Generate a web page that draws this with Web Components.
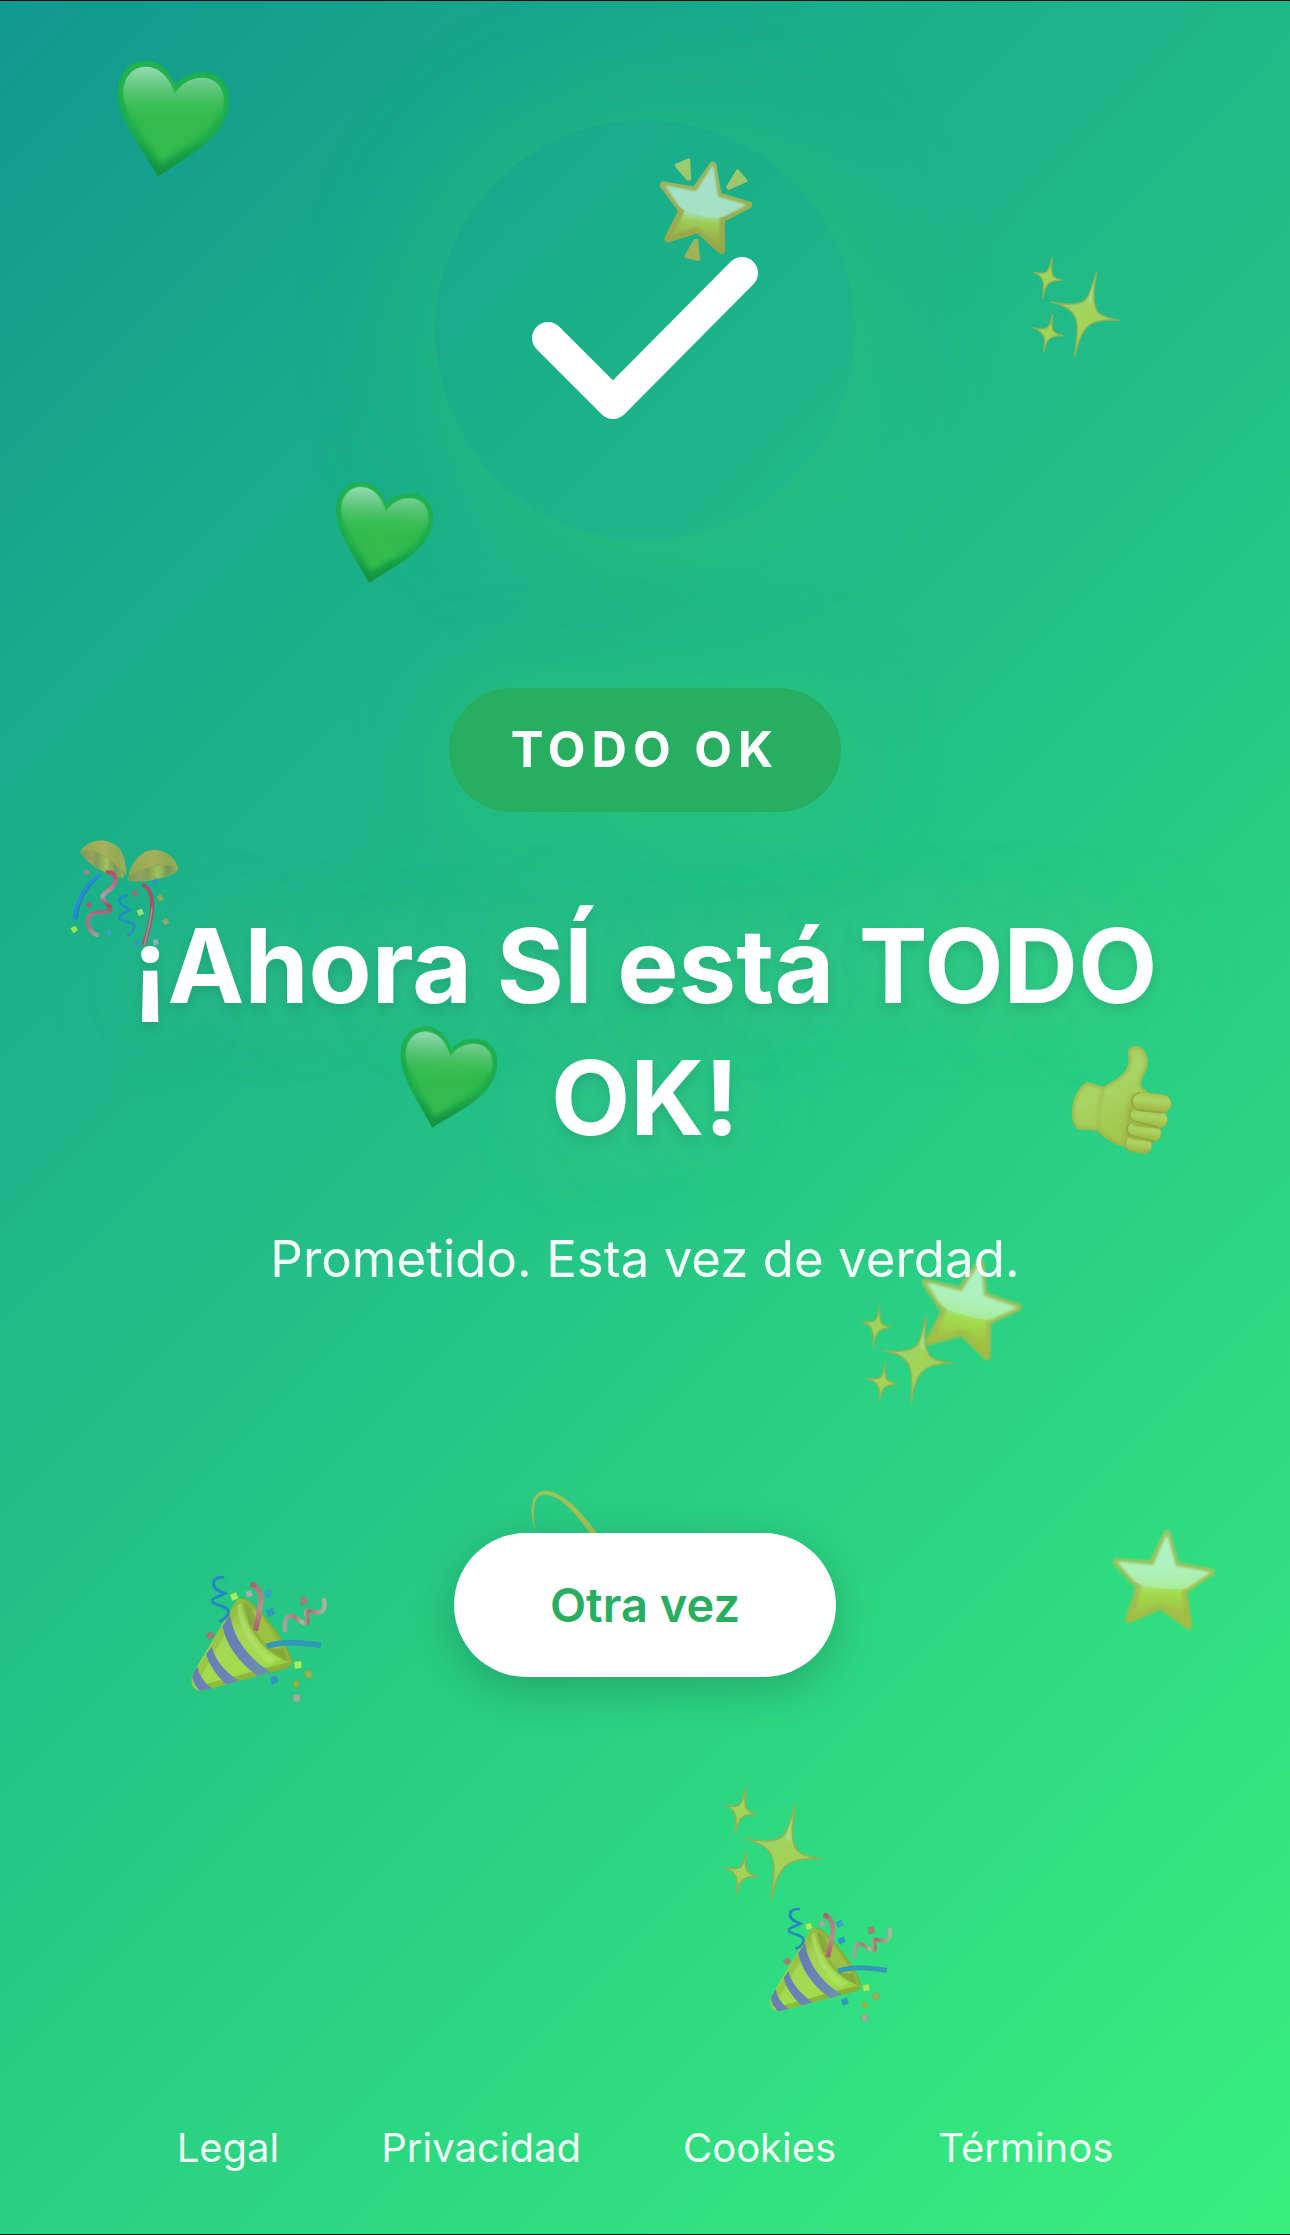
<!DOCTYPE html>
<html lang="es">
<head>
<meta charset="utf-8">
<meta name="viewport" content="width=device-width, initial-scale=1">
<title>Todo OK</title>
<style>
  body {
    margin: 0;
    font-family: Inter, "Liberation Sans", sans-serif;
    color: white;
  }
</style>
</head>
<body>
<success-page>
  <emoji-rain slot="background"></emoji-rain>
  <success-check></success-check>
  <status-badge>TODO OK</status-badge>
  <success-message>
    ¡Ahora SÍ está TODO OK!
    <span slot="subtitle">Prometido. Esta vez de verdad.</span>
  </success-message>
  <retry-button>Otra vez</retry-button>
  <site-footer slot="footer">
    <footer-link href="#legal">Legal</footer-link>
    <footer-link href="#privacidad">Privacidad</footer-link>
    <footer-link href="#cookies">Cookies</footer-link>
    <footer-link href="#terminos">Términos</footer-link>
  </site-footer>
</success-page>

<script>
// Each drawing has its own viewBox; size is the natural width and height in px.
const sparkle = `
  <linearGradient id="spark" x1="0" y1="0" x2="1" y2="1">
    <stop offset="0" stop-color="#8fd08a"/><stop offset=".5" stop-color="#a3d458"/><stop offset="1" stop-color="#93cd58"/>
  </linearGradient>
  <filter id="soft" x="-10%" y="-10%" width="120%" height="120%"><feGaussianBlur stdDeviation="2"/></filter>
  <g filter="url(#soft)" fill="url(#spark)" stroke="#93b152" stroke-width="4" stroke-linejoin="round">
    <path d="M257 96C250 140 244 174 254 204C260 226 288 235 328 241C284 238 246 240 226 264C206 286 198 320 191 350C193 314 204 278 197 246C192 212 158 195 122 186C160 194 200 198 222 180C240 162 244 130 257 96Z"/>
    <path d="M124 52C121 76 119 93 125 105C130 114 140 117 152 120C136 121 119 122 110 133C102 145 98 159 95 174C96 157 100 139 96 124C93 110 82 103 69 97C84 100 98 102 107 95C116 87 119 70 124 52Z"/>
    <path d="M125 223C122 244 120 260 127 272C132 280 143 284 156 287C140 287 122 288 113 299C105 309 101 323 98 336C99 321 104 305 99 292C95 279 82 269 67 263C84 267 99 269 109 263C118 255 120 240 125 223Z"/>
  </g>
  <path d="M248 126C242 150 239 174 245 196C236 186 229 190 234 174Z" fill="#a9dfa0" opacity=".8" filter="url(#soft)"/>`;

const DRAWINGS = {
  heart: {
    box: "0 0 480 480", size: [160, 160],
    art: `
      <linearGradient id="edge" x1="0" y1="0" x2="0" y2="1">
        <stop offset="0" stop-color="#20b150"/><stop offset=".65" stop-color="#1cab4b"/><stop offset="1" stop-color="#128f40"/>
      </linearGradient>
      <linearGradient id="shine" x1="0" y1="0" x2="0" y2="1">
        <stop offset="0" stop-color="#95dcb5"/><stop offset=".22" stop-color="#6ccb88" stop-opacity=".8"/><stop offset=".55" stop-color="#3fbf5c" stop-opacity="0"/>
      </linearGradient>
      <filter id="soft"><feGaussianBlur stdDeviation="9"/></filter>
      <filter id="fine"><feGaussianBlur stdDeviation="2"/></filter>
      <path fill="url(#edge)" filter="url(#fine)" d="M256 136C240 94 210 63 168 63C115 63 83 105 83 160C83 240 150 316 205 410C290 350 418 290 418 178C418 130 385 96 338 96C304 96 275 110 256 136Z"/>
      <path fill="#30bc4e" filter="url(#soft)" d="M253 162C238 112 208 84 168 84C125 84 102 116 102 160C104 232 170 300 210 372C284 322 398 268 398 182C398 142 375 118 340 118C300 118 270 136 253 162Z"/>
      <path fill="url(#shine)" filter="url(#fine)" d="M254 160C240 114 208 80 168 80C125 80 100 115 100 158C102 235 170 300 210 370C284 322 402 268 402 182C402 142 375 113 338 113C300 113 272 133 254 160Z"/>`,
  },
  sparkles: { box: "0 0 420 390", size: [140, 130], art: sparkle },
  star: {
    box: "0 0 450 420", size: [150, 140],
    art: `
      <linearGradient id="rim" x1="0" y1="0" x2="0" y2="1">
        <stop offset="0" stop-color="#9dc56b"/><stop offset="1" stop-color="#a2bd43"/>
      </linearGradient>
      <linearGradient id="body" x1="0" y1="0" x2="0" y2="1">
        <stop offset="0" stop-color="#aff2c6"/><stop offset=".6" stop-color="#a9ed9c"/><stop offset=".68" stop-color="#a2df4f"/><stop offset="1" stop-color="#a0bf43"/>
      </linearGradient>
      <linearGradient id="gloss" gradientUnits="userSpaceOnUse" x1="0" y1="80" x2="0" y2="250">
        <stop offset="0" stop-color="#aef1c8"/><stop offset=".6" stop-color="#aef1bf"/><stop offset="1" stop-color="#a9ec98"/>
      </linearGradient>
      <filter id="soft"><feGaussianBlur stdDeviation="5"/></filter>
      <filter id="fine"><feGaussianBlur stdDeviation="3"/></filter>
      <clipPath id="top"><path d="M0 0H450V205Q220 285 50 175L0 150Z"/></clipPath>
      <path fill="url(#rim)" stroke="url(#rim)" stroke-width="22" stroke-linejoin="round" filter="url(#fine)" d="M231 70L257 167L364 186L280 242L295 346L210 286L117 329L149 231L79 156L187 163Z"/>
      <path fill="url(#body)" filter="url(#soft)" d="M231 78L255 170L352 188L276 240L284 318L210 277L132 312L155 228L90 158L190 168Z"/>
      <g clip-path="url(#top)"><path fill="url(#gloss)" stroke="url(#gloss)" stroke-width="4" filter="url(#fine)" opacity=".85" d="M231 80L255 170L358 188L275 242L296 350L210 278L120 325L152 234L86 158L191 168Z"/></g>`,
  },
  glowStar: {
    box: "759 189 321 342", size: [107, 114],
    art: `
      <linearGradient id="rim" x1="0" y1="0" x2="0" y2="1">
        <stop offset="0" stop-color="#9cb864"/><stop offset="1" stop-color="#98a745"/>
      </linearGradient>
      <linearGradient id="body" gradientUnits="userSpaceOnUse" x1="925" y1="220" x2="895" y2="490">
        <stop offset="0" stop-color="#a5e2cd"/><stop offset=".58" stop-color="#a3dfaa"/><stop offset=".66" stop-color="#9fce58"/><stop offset=".92" stop-color="#98a745"/>
      </linearGradient>
      <linearGradient id="ray" x1="0" y1="0" x2="0" y2="1">
        <stop offset="0" stop-color="#9ccd70"/><stop offset="1" stop-color="#9eb158"/>
      </linearGradient>
      <filter id="soft"><feGaussianBlur stdDeviation="3"/></filter>
      <filter id="fine"><feGaussianBlur stdDeviation="1"/></filter>
      <clipPath id="top"><path d="M759 189H1080V355Q930 420 820 345L759 290Z"/></clipPath>
      <g filter="url(#fine)">
        <path fill="url(#rim)" stroke="url(#rim)" stroke-width="22" stroke-linejoin="round" d="M937 229L953 320L1044 348L962 390L963 484L893 421L803 449L845 365L789 288L884 304Z"/>
        <path fill="url(#ray)" stroke="url(#ray)" stroke-width="8" stroke-linejoin="round" d="M826 229L865 212L868 270L862 271ZM1011 245L1037 275L984 299L981 294ZM883 454L889 453L895 512L855 503Z"/>
      </g>
      <path fill="url(#body)" filter="url(#soft)" d="M937 232L951 324L1034 348L957 388L956 468L890 414L816 438L853 365L796 291L887 309Z"/>
      <g clip-path="url(#top)"><path fill="#a5e1c9" filter="url(#soft)" opacity=".9" d="M937 230L951 323L1038 348L957 388L956 468L890 414L816 438L845 365L794 290L887 308Z"/></g>`,
  },
  thumb: {
    box: "0 0 420 420", size: [140, 140],
    art: `
      <linearGradient id="skin" x1="0" y1="0" x2=".4" y2="1">
        <stop offset="0" stop-color="#a6cb62"/><stop offset=".5" stop-color="#aad566"/><stop offset="1" stop-color="#a2c44b"/>
      </linearGradient>
      <linearGradient id="finger" x1="0" y1="0" x2="0" y2="1">
        <stop offset="0" stop-color="#a6c857"/><stop offset=".4" stop-color="#abd464"/><stop offset="1" stop-color="#9bb33e"/>
      </linearGradient>
      <filter id="soft"><feGaussianBlur stdDeviation="5"/></filter>
      <filter id="fine"><feGaussianBlur stdDeviation="1.5"/></filter>
      <clipPath id="hand"><path d="M112 156C84 168 66 210 66 252C67 276 74 292 85 298L142 302C166 328 194 344 228 351L270 330L300 190C282 182 273 171 273 157C276 138 294 120 293 94C292 66 275 47 254 48C240 49 234 57 235 72C237 93 236 109 226 122C206 146 184 157 158 170Z"/></clipPath>
      <g filter="url(#fine)">
        <g clip-path="url(#hand)">
          <path fill="url(#skin)" d="M60 40H310V360H60Z"/>
          <path fill="none" stroke="#9bb243" stroke-width="14" opacity=".75" filter="url(#soft)" d="M112 156C84 168 66 210 66 252C67 276 74 292 85 298L142 302C166 328 194 344 228 351L270 330L300 190C282 182 273 171 273 157C276 138 294 120 293 94C292 66 275 47 254 48C240 49 234 57 235 72C237 93 236 109 226 122C206 146 184 157 158 170Z"/>
          <path fill="#9bb243" opacity=".55" filter="url(#soft)" d="M158 170C146 205 140 250 142 302L150 304C148 250 152 205 165 172ZM243 195C226 226 218 290 226 350L252 350V190Z"/>
        </g>
        <rect x="227" y="320" width="79" height="48" rx="24" transform="rotate(8 266 344)" fill="url(#finger)" stroke="#98ae3f" stroke-width="2"/>
        <rect x="230" y="281" width="104" height="50" rx="25" transform="rotate(8 282 306)" fill="url(#finger)" stroke="#98ae3f" stroke-width="2"/>
        <rect x="237" y="239" width="116" height="52" rx="26" transform="rotate(7 295 265)" fill="url(#finger)" stroke="#98ae3f" stroke-width="2"/>
        <rect x="246" y="190" width="118" height="56" rx="28" transform="rotate(6 305 218)" fill="url(#finger)" stroke="#98ae3f" stroke-width="2"/>
        <path fill="none" stroke="#8ca038" stroke-width="5" opacity=".7" d="M270 187C252 190 243 202 246 220C248 232 256 238 268 240L334 248M244 238C237 250 238 266 252 274L324 292M238 280C227 292 229 306 240 316L312 334"/>
      </g>`,
  },
  popper: {
    box: "0 0 540 510", size: [180, 170],
    art: `
      <linearGradient id="cone" x1=".2" y1=".2" x2=".6" y2="1">
        <stop offset="0" stop-color="#92bd42"/><stop offset=".35" stop-color="#a5d556"/><stop offset=".75" stop-color="#a1dd4b"/><stop offset="1" stop-color="#86ac35"/>
      </linearGradient>
      <linearGradient id="stripe" x1="0" y1="0" x2="1" y2="1">
        <stop offset="0" stop-color="#577eae"/><stop offset=".5" stop-color="#6a80b8"/><stop offset="1" stop-color="#6e9aa5"/>
      </linearGradient>
      <linearGradient id="red" x1="0" y1="0" x2="0" y2="1">
        <stop offset="0" stop-color="#a97678"/><stop offset=".5" stop-color="#b98e8c"/><stop offset="1" stop-color="#a95f66"/>
      </linearGradient>
      <linearGradient id="curl" x1="0" y1="0" x2="1" y2="0">
        <stop offset="0" stop-color="#a5a69b"/><stop offset=".25" stop-color="#ac7675"/><stop offset=".45" stop-color="#a3c0a0"/><stop offset=".6" stop-color="#a96c6e"/><stop offset="1" stop-color="#acb5a5"/>
      </linearGradient>
      <filter id="fine"><feGaussianBlur stdDeviation="1.5"/></filter>
      <clipPath id="body"><path d="M217 146C205 143 196 155 188 170L68 373C58 397 70 426 98 422L340 358C362 351 369 345 364 338C285 318 225 240 217 146Z"/></clipPath>
      <g filter="url(#fine)">
        <path fill="#8fb53b" stroke="#87a337" stroke-width="3" d="M207 150C220 138 240 153 263 178C307 224 350 282 365 331C369 349 355 350 335 338C280 314 222 252 210 168Z"/>
        <path fill="#a6c94b" opacity=".6" d="M232 165C270 188 315 248 335 300L300 298C266 260 245 225 232 165Z"/>
        <path fill="#7d9d3e" opacity=".6" d="M223 160L246 175L262 226L240 226ZM290 294L338 296L353 334Z"/>
        <path fill="none" stroke="url(#red)" stroke-width="16" d="M242 103C268 108 278 137 270 169C266 200 262 219 256 242"/>
        <circle cx="250" cy="104" r="9" fill="#a6686c"/>
        <g clip-path="url(#body)">
          <path fill="url(#cone)" d="M40 130H380V430H40Z"/>
          <path fill="#91b936" opacity=".55" d="M217 146L188 170L60 395L75 410L210 175Z"/>
          <path fill="#7ea132" opacity=".55" d="M90 428L370 353L362 335L115 400Z"/>
          <path fill="#b4e774" opacity=".5" d="M213 158C219 225 255 295 320 330L300 345C240 300 208 230 200 168Z"/>
          <path fill="url(#stripe)" d="M180 195C190 262 232 325 309 370L270 382C205 340 166 278 158 229ZM125 290C138 335 166 364 207 393L173 407C138 377 115 340 109 312ZM83 350C88 380 105 400 131 418L97 432C68 402 62 379 70 358Z"/>
        </g>
        <path fill="none" stroke="#3198b5" stroke-width="17" d="M290 289C340 271 394 278 453 286"/>
        <path fill="none" stroke="#2689c1" stroke-width="9" stroke-linecap="round" d="M159 82C133 79 123 101 136 116C146 126 161 126 166 130C155 137 126 143 126 153C126 164 161 165 173 179C181 190 166 208 151 213"/>
        <path fill="none" stroke="#2582c3" stroke-width="6" d="M131 86C127 101 133 114 149 122"/>
        <path fill="none" stroke="url(#curl)" stroke-width="13" d="M344 247C344 215 348 196 364 197C382 200 391 219 407 220C424 218 399 184 412 183C424 181 440 195 455 184C467 174 464 159 461 144"/>
      </g>
      <g stroke-width="2" filter="url(#fine)">
        <path fill="#a4f159" stroke="#8ac852" d="M180 134L198 127L206 145L187 153Z"/>
        <path fill="#9fb59f" stroke="#8a9b8e" d="M226 125L243 120L249 137L232 143Z"/>
        <path fill="#34a6c7" stroke="#319ebd" d="M283 127L301 118L308 134L290 143Z"/>
        <path fill="#3196c7" stroke="#318cc0" d="M289 183L308 175L314 191L297 199Z"/>
        <path fill="#a87d75" stroke="#98756a" d="M390 145L407 140L412 159L394 165Z"/>
        <path fill="#a87870" stroke="#907766" d="M108 254L123 244L133 258L118 269Z"/>
        <path fill="#3197c7" stroke="#2e8dc0" d="M301 385L318 378L325 395L307 403Z"/>
        <path fill="#a5f35a" stroke="#8bd54f" d="M373 336L393 333L395 353L375 356Z"/>
        <path fill="#a0b153" stroke="#8ea34b" d="M404 366L422 361L428 379L410 385Z"/>
        <path fill="#9ab338" stroke="#87a33d" d="M378 389L390 402L380 414L368 402Z"/>
        <path fill="#a2ad9c" stroke="#83a088" d="M369 435L389 433L390 453L371 455Z"/>
      </g>`,
  },
  ball: {
    box: "0 0 510 450", size: [170, 150],
    art: `
      <linearGradient id="gold" x1="0" y1="0" x2="1" y2="0">
        <stop offset="0" stop-color="#95a84e"/><stop offset=".5" stop-color="#a6b15c"/><stop offset=".8" stop-color="#93aa54"/><stop offset="1" stop-color="#9cae58"/>
      </linearGradient>
      <linearGradient id="inside" x1="0" y1="0" x2="1" y2="0">
        <stop offset="0" stop-color="#799854"/><stop offset=".25" stop-color="#99a060"/><stop offset=".38" stop-color="#829d58"/><stop offset=".6" stop-color="#9dc35b"/><stop offset=".8" stop-color="#73965a"/><stop offset="1" stop-color="#a2ae53"/>
      </linearGradient>
      <linearGradient id="ribbon" x1="0" y1="0" x2="0" y2="1">
        <stop offset="0" stop-color="#ad4e68"/><stop offset=".28" stop-color="#b98795"/><stop offset=".38" stop-color="#a5a4a9"/><stop offset=".53" stop-color="#a24b67"/><stop offset=".68" stop-color="#a47886"/><stop offset=".86" stop-color="#a86e7e"/><stop offset="1" stop-color="#a2a29f"/>
      </linearGradient>
      <filter id="fine"><feGaussianBlur stdDeviation="1.5"/></filter>
      <g filter="url(#fine)">
        <path fill="url(#gold)" d="M91 92C120 55 173 50 207 84C222 101 229 138 229 166C222 155 187 120 151 103C125 92 98 89 91 92Z"/>
        <path fill="url(#inside)" stroke="#9ba651" stroke-width="3" d="M92 94C107 82 157 99 184 122C214 146 228 168 219 171C193 174 111 137 92 94Z"/>
        <path fill="url(#gold)" d="M234 178C240 129 273 88 318 89C354 94 380 118 384 145C354 132 281 136 234 170Z"/>
        <path fill="url(#inside)" stroke="#9ba651" stroke-width="3" d="M234 175C257 149 333 126 374 138C405 146 359 172 304 179C271 184 230 185 234 175Z"/>
        <path fill="none" stroke="url(#ribbon)" stroke-width="13" d="M168 157C198 155 205 184 182 206C169 216 155 223 157 234C166 253 184 256 181 272C170 282 137 269 119 288C103 311 121 339 146 346"/>
        <path fill="none" stroke="#278dd0" stroke-width="13" d="M150 165C107 197 79 240 74 299"/>
        <path fill="none" stroke="#1f78c5" stroke-width="3" d="M144 175C110 205 89 240 80 297"/>
        <path fill="none" stroke="#268bc9" stroke-width="8" d="M234 226C207 228 200 245 220 258C230 265 242 266 240 271C224 276 207 286 209 297C221 309 245 301 253 316C256 328 242 343 231 347"/>
        <path fill="none" stroke="#a5516b" stroke-width="12" d="M276 194C325 213 306 305 280 377"/>
        <path fill="none" stroke="#a19698" stroke-width="4" d="M306 263C303 308 289 350 282 378"/>
      </g>
      <g filter="url(#fine)">
        <path fill="#9c8799" d="M99 156L109 147L121 156L110 168Z"/>
        <path fill="#9e6173" d="M106 254L116 245L127 255L117 266Z"/>
        <path fill="#9be252" d="M61 325L75 317L84 331L70 340Z"/>
        <path fill="#39a2d0" d="M168 335L178 327L188 339L177 350Z"/>
        <path fill="#328fd4" d="M307 181L319 178L324 190L313 196ZM250 365L261 360L268 373L257 379Z"/>
        <path fill="#a06c76" d="M245 214L259 210L264 225L249 230Z"/>
        <path fill="#a0e479" d="M260 272L275 266L282 281L267 288Z"/>
        <path fill="#9aaa50" d="M320 230L332 223L342 237L329 244Z"/>
        <path fill="#9ba864" d="M336 301L350 293L358 308L345 315Z"/>
        <path fill="#9cacab" d="M308 361L321 357L327 372L312 377Z"/>
      </g>`,
  },
  dizzy: {
    box: "0 0 270 240", size: [90, 80],
    art: `
      <filter id="fine"><feGaussianBlur stdDeviation="1"/></filter>
      <path fill="#9fc457" stroke="#a5b558" stroke-width="2" filter="url(#fine)" d="M43 142C34 112 33 82 40 60C47 40 63 31 82 33C132 41 180 90 232 162L212 162C166 98 124 50 82 44C66 41 53 47 47 61C38 82 40 110 43 142Z"/>`,
  },
};

// x is measured from the middle of the page, y from its top, both to the drawing's centre.
const EMOJIS = [
  { kind: "heart", x: -475, y: 119 },
  { kind: "glowStar", x: 62, y: 208 },
  { kind: "sparkles", x: 436, y: 304 },
  { kind: "heart", x: -264, y: 533, scale: 0.87, turn: 2 },
  { kind: "ball", x: -510, y: 894 },
  { kind: "heart", x: -200, y: 1078, scale: 0.87, turn: 3 },
  { kind: "thumb", x: 475, y: 1099 },
  { kind: "sparkles", x: 268, y: 1350, scale: 1.02, turn: -5 },
  { kind: "star", x: 326, y: 1307, turn: 9 },
  { kind: "dizzy", x: -80, y: 1519 },
  { kind: "star", x: 520, y: 1579 },
  { kind: "popper", x: -385, y: 1634 },
  { kind: "sparkles", x: 133, y: 1841, scale: 1.12 },
  { kind: "popper", x: 187, y: 1960, scale: 0.9 },
];

class FloatingEmoji extends HTMLElement {
  constructor() {
    super();
    this.attachShadow({ mode: "open" });
  }

  connectedCallback() {
    const { box, size, art } = DRAWINGS[this.getAttribute("kind")];
    this.shadowRoot.innerHTML = `
      <style>
        :host {
          display: block;
          position: absolute;
          transform: translate(-50%, -50%) rotate(var(--turn, 0deg)) scale(var(--scale, 1));
        }
        svg { display: block; }
      </style>
      <svg viewBox="${box}" width="${size[0]}" height="${size[1]}" aria-hidden="true">${art}</svg>
    `;
  }
}

class EmojiRain extends HTMLElement {
  constructor() {
    super();
    this.attachShadow({ mode: "open" });
    this.shadowRoot.innerHTML = `
      <style>
        :host {
          display: block;
          position: absolute;
          inset: 0;
          overflow: hidden;
          pointer-events: none;
        }
      </style>
    `;
  }

  connectedCallback() {
    for (const { kind, x, y, scale = 1, turn = 0 } of EMOJIS) {
      const emoji = document.createElement("floating-emoji");
      emoji.setAttribute("kind", kind);
      emoji.style.left = `calc(50% + ${x}px)`;
      emoji.style.top = `${y}px`;
      emoji.style.setProperty("--scale", scale);
      emoji.style.setProperty("--turn", `${turn}deg`);
      this.shadowRoot.appendChild(emoji);
    }
  }
}

class SuccessPage extends HTMLElement {
  constructor() {
    super();
    this.attachShadow({ mode: "open" });
    this.shadowRoot.innerHTML = `
      <style>
        :host {
          display: flex;
          flex-direction: column;
          box-sizing: border-box;
          position: relative;
          min-height: 100vh;
          border-block: 1px solid #07120f;
          background: linear-gradient(135deg, #11998e 0%, #38ef7d 100%);
        }
        main {
          flex: 1;
          display: flex;
          flex-direction: column;
          align-items: center;
          padding: 119px 72px 48px;
        }
        main, slot[name="footer"]::slotted(*) {
          position: relative;
        }
      </style>
      <slot name="background"></slot>
      <main><slot></slot></main>
      <slot name="footer"></slot>
    `;
  }
}

class SuccessCheck extends HTMLElement {
  constructor() {
    super();
    this.attachShadow({ mode: "open" });
    this.shadowRoot.innerHTML = `
      <style>
        :host {
          display: block;
          width: 420px;
          height: 420px;
          margin-bottom: 148px;
          border-radius: 50%;
          box-shadow: 0 0 120px rgb(46 204 113 / 50%);
        }
        svg { display: block; }
      </style>
      <svg viewBox="0 0 420 420" role="img" aria-label="Correcto">
        <path d="M113 218L178 283L307 153" fill="none" stroke="white" stroke-width="32" stroke-linecap="round" stroke-linejoin="round"/>
      </svg>
    `;
  }
}

class StatusBadge extends HTMLElement {
  constructor() {
    super();
    this.attachShadow({ mode: "open" });
    this.shadowRoot.innerHTML = `
      <style>
        :host {
          display: block;
          margin-bottom: 88px;
          padding: 32px 62px;
          border-radius: 999px;
          background: #27ae60;
          box-shadow: 0 0 90px rgb(46 204 113 / 50%);
          font-size: 49px;
          line-height: 60px;
          font-weight: 700;
          letter-spacing: 6px;
        }
      </style>
      <slot></slot>
    `;
  }
}

class SuccessMessage extends HTMLElement {
  constructor() {
    super();
    this.attachShadow({ mode: "open" });
    this.shadowRoot.innerHTML = `
      <style>
        :host {
          display: block;
          margin-bottom: 235px;
          text-align: center;
        }
        h1 {
          margin: 0 0 56px;
          font-size: 103px;
          line-height: 132px;
          font-weight: 700;
          text-shadow:
            0 6px 12px rgb(0 0 0 / 10%),
            0 0 90px rgb(120 200 150 / 40%);
        }
        p {
          margin: 0;
          font-size: 51px;
          line-height: 78px;
          opacity: 0.95;
        }
      </style>
      <h1><slot></slot></h1>
      <p><slot name="subtitle"></slot></p>
    `;
  }
}

class RetryButton extends HTMLElement {
  constructor() {
    super();
    this.attachShadow({ mode: "open" });
    this.shadowRoot.innerHTML = `
      <style>
        :host { display: block; }
        button {
          display: block;
          padding: 42px 96px;
          border: none;
          border-radius: 999px;
          background: white;
          box-shadow: 0 12px 45px rgb(0 0 0 / 20%);
          color: #27ae60;
          font: inherit;
          font-size: 47px;
          line-height: 60px;
          font-weight: 600;
          cursor: pointer;
        }
      </style>
      <button type="button"><slot></slot></button>
    `;
  }
}

class SiteFooter extends HTMLElement {
  constructor() {
    super();
    this.attachShadow({ mode: "open" });
    this.shadowRoot.innerHTML = `
      <style>
        :host { display: block; }
        nav {
          display: flex;
          flex-wrap: wrap;
          justify-content: center;
          gap: 32px 102px;
          padding: 0 48px 56px;
        }
      </style>
      <nav aria-label="Información legal"><slot></slot></nav>
    `;
  }
}

class FooterLink extends HTMLElement {
  constructor() {
    super();
    this.attachShadow({ mode: "open" });
    this.shadowRoot.innerHTML = `
      <style>
        :host { display: block; }
        a {
          color: rgb(255 255 255 / 95%);
          font-size: 40px;
          line-height: 60px;
          text-decoration: none;
        }
      </style>
      <a><slot></slot></a>
    `;
  }

  connectedCallback() {
    this.shadowRoot.querySelector("a").href = this.getAttribute("href");
  }
}

customElements.define("floating-emoji", FloatingEmoji);
customElements.define("emoji-rain", EmojiRain);
customElements.define("success-page", SuccessPage);
customElements.define("success-check", SuccessCheck);
customElements.define("status-badge", StatusBadge);
customElements.define("success-message", SuccessMessage);
customElements.define("retry-button", RetryButton);
customElements.define("site-footer", SiteFooter);
customElements.define("footer-link", FooterLink);
</script>
</body>
</html>
